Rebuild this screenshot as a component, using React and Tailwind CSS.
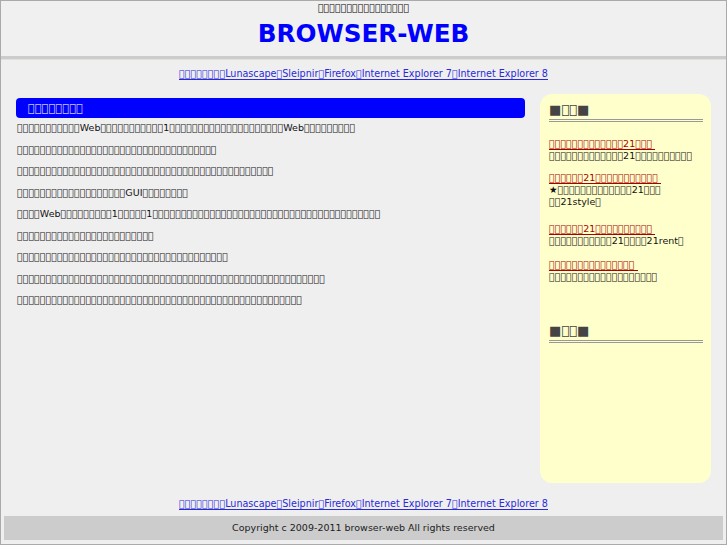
import React from 'react'

// glyphs the original page showed as empty boxes
const T = (n) => '\uE000'.repeat(n)

const navItems = ['Lunascape', 'Sleipnir', 'Firefox', 'Internet Explorer 7', 'Internet Explorer 8']

const NavLinks = () => (
  <p className="text-center text-[9.6px] leading-[12px] text-[#2a2ad8]">
    <span className="inline-block border-b border-[#2a2ad8] leading-[11px]">
      <a href="#">{T(8)}</a>
      {navItems.map((n, i) => (
        <a key={n} href="#">{(i > 0 ? T(1) : '') + n}</a>
      ))}
    </span>
  </p>
)

const paragraphs = [
  [T(11), 'Web', T(11), '1', T(20), 'Web', T(9)],
  [T(35)],
  [T(45)],
  [T(19), 'GUI', T(8)],
  [T(4), 'Web', T(9), '1', T(5), '1', T(40)],
  [T(24)],
  [T(37)],
  [T(54)],
  [T(50)],
]

const news = [
  { title: T(13) + '21' + T(3), desc: [T(13) + '21' + T(10)], mb: 'mb-[10px]' },
  { title: T(6) + '21' + T(11), desc: ['★' + T(13) + '21' + T(3), T(2) + '21style' + T(1)], mb: 'mb-[15px]' },
  { title: T(6) + '21' + T(10), desc: [T(11) + '21' + T(4) + '21rent' + T(1)], mb: 'mb-[12px]' },
  { title: T(15), desc: [T(19)], mb: '' },
]

const SideHeading = ({ className = '' }) => (
  <h3 className={`text-[13px] leading-[16px] font-bold text-[#444] pb-[1px] border-b-[3px] border-double border-[#999] ${className}`}>
    ■{T(2)}■
  </h3>
)

export default function App() {
  return (
    <div className="h-[545px] flex flex-col bg-[#efefef] border border-[#aaa] text-[#111]" style={{ fontFamily: '"DejaVu Sans", sans-serif' }}>
      {/* header */}
      <header className="bg-[#f0f0f0] text-center pt-[1px]">
        <p className="text-[9.5px] leading-[12px] text-black">{T(16)}</p>
        <h1 className="mt-[6px] text-[24.7px] leading-[28px] font-bold text-[#0000ff]">BROWSER-WEB</h1>
        <div className="mt-[8px] h-[4px] bg-[#cccccc] border-b border-[#e2e2d8]" />
      </header>

      <div className="mt-[8px]">
        <NavLinks />
      </div>

      <div className="mt-[14px] flex gap-[15px] px-[15px]">
        {/* main column */}
        <main className="flex-1 pt-[4px]">
          <h2 className="h-[20px] rounded-[4px] bg-[#0000ff] pl-[12px] text-[11.5px] leading-[20px] text-[#c8c8ff]">{T(8)}</h2>
          <div className="-mt-[1px] text-[9.5px] leading-[21.5px] text-[#111] pl-[1px]">
            {paragraphs.map((p, i) => (
              <p key={i}>{p.join('')}</p>
            ))}
          </div>
        </main>

        {/* sidebar */}
        <aside className="w-[171px] h-[389px] rounded-[12px] bg-[#ffffcc] pl-[9px] pr-[8px] pt-[8px]">
          <SideHeading />
          <ul className="mt-[16px] text-[9.5px] leading-[12px]">
            {news.map((n, i) => (
              <li key={i} className={n.mb}>
                <a href="#" className="inline-block pr-[3px] border-b border-[#a80000] leading-[11px] text-[#a80000]">{n.title}</a>
                {n.desc.map((d, j) => (
                  <p key={j} className="text-[#111]">{d}</p>
                ))}
              </li>
            ))}
          </ul>
          <SideHeading className="mt-[40px]" />
        </aside>
      </div>

      <div className="mt-[15px]">
        <NavLinks />
      </div>

      <footer className="mx-[3px] mt-[6px] h-[24px] bg-[#cccccc] text-center text-[9.5px] leading-[24px] text-[#222]">
        Copyright c 2009-2011 browser-web All rights reserved
      </footer>
    </div>
  )
}
